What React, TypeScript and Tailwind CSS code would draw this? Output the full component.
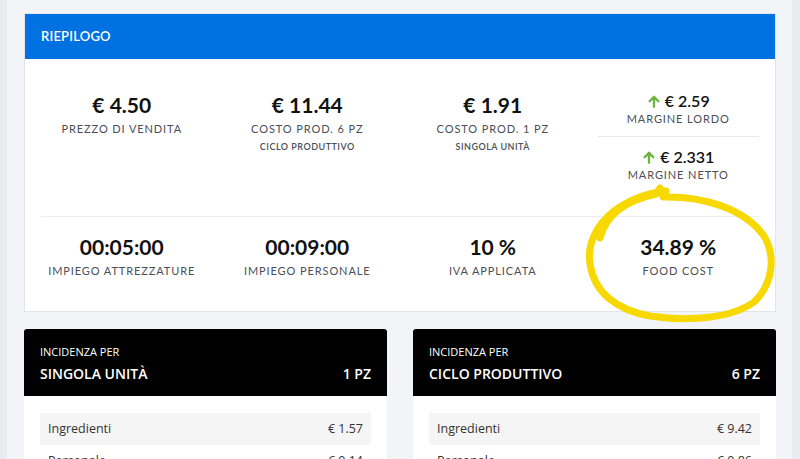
const ArrowUpIcon = () => (
  <svg width="14" height="15" viewBox="0 0 24 24" fill="none" stroke="#6db33f" strokeWidth="4" strokeLinecap="round" strokeLinejoin="round" className="mr-1 inline-block">
    <path d="M12 21V5M4.5 11.5L12 4l7.5 7.5" />
  </svg>
);

const Stat = ({ value, label, sub }: { value: string; label: string; sub?: string }) => (
  <div className="flex flex-col items-center px-3 text-center">
    <div className="text-[21px] font-bold leading-7 text-[#111]">{value}</div>
    <div className="mt-0.5 text-[11px] leading-4 tracking-[0.9px] text-[#4a4f57]">{label}</div>
    {sub && <div className="mt-0.5 text-[9px] font-semibold leading-4 tracking-[0.5px] text-[#4a4f57]">{sub}</div>}
  </div>
);

const Margin = ({ value, label }: { value: string; label: string }) => (
  <div className="flex flex-col items-center">
    <div className="flex items-center text-[16px] font-semibold leading-5 text-[#111]">
      <ArrowUpIcon />
      {value}
    </div>
    <div className="text-[11px] leading-4 tracking-[0.9px] text-[#4a4f57]">{label}</div>
  </div>
);

const Incidenza = ({ title, qty, rows }: { title: string; qty: string; rows: [string, string][] }) => (
  <div className="flex-1 overflow-hidden rounded-t-[3px] bg-white font-['Open_Sans',sans-serif]">
    <div className="bg-black px-4 pb-3 pt-[15px] text-white">
      <div className="text-[11px] leading-4">INCIDENZA PER</div>
      <div className="mt-1 flex justify-between text-[14px] font-semibold leading-5">
        <span>{title}</span>
        <span>{qty}</span>
      </div>
    </div>
    <div className="px-4 pt-[17px]">
      {rows.map(([k, v], i) => (
        <div key={k} className={`flex h-8 items-center justify-between px-2 text-[12.5px] text-[#333] ${i % 2 === 0 ? "bg-[#f5f5f5]" : ""}`}>
          <span>{k}</span>
          <span>{v}</span>
        </div>
      ))}
    </div>
  </div>
);

export default function App() {
  return (
    <div className="relative flex h-[459px] w-[800px] overflow-hidden bg-[#e9ebef] font-['Lato',sans-serif]">
      <div className="w-[7px]" />
      <div className="flex-1 bg-[#f3f4f7] pl-[17px] pr-4 pt-[13px]">
        <div className="border border-[#e2e5ea] bg-white">
          <div className="flex h-[45px] items-center bg-[#0071e0] px-4 text-[13px] font-semibold tracking-[0.2px] text-white">
            RIEPILOGO
          </div>
          <div className="p-4">
            <div className="-mx-3 grid grid-cols-4 pb-[33px] pt-4">
              <Stat value="€ 4.50" label="PREZZO DI VENDITA" />
              <Stat value="€ 11.44" label="COSTO PROD. 6 PZ" sub="CICLO PRODUTTIVO" />
              <Stat value="€ 1.91" label="COSTO PROD. 1 PZ" sub="SINGOLA UNITÀ" />
              <div className="px-3">
                <Margin value="€ 2.59" label="MARGINE LORDO" />
                <div className="mt-[9px] border-t border-[#e6e8ec] pt-[10px]">
                  <Margin value="€ 2.331" label="MARGINE NETTO" />
                </div>
              </div>
            </div>
            <div className="border-t border-[#eceef1]">
              <div className="-mx-3 grid grid-cols-4 pb-4 pt-4">
                <Stat value="00:05:00" label="IMPIEGO ATTREZZATURE" />
                <Stat value="00:09:00" label="IMPIEGO PERSONALE" />
                <Stat value="10 %" label="IVA APPLICATA" />
                <Stat value="34.89 %" label="FOOD COST" />
              </div>
            </div>
          </div>
        </div>
        <div className="mt-[17px] flex gap-[26px]">
          <Incidenza title="SINGOLA UNITÀ" qty="1 PZ" rows={[["Ingredienti", "€ 1.57"], ["Personale", "€ 0.14"]]} />
          <Incidenza title="CICLO PRODUTTIVO" qty="6 PZ" rows={[["Ingredienti", "€ 9.42"], ["Personale", "€ 0.86"]]} />
        </div>
      </div>
      <div className="w-2" />
      <svg className="pointer-events-none absolute left-0 top-0" width="800" height="459">
        <path
          d="M600 238 C606 214 628 200 656 194 L660 188 L663 197 C702 196 744 208 764 236 C776 256 773 284 754 302 C732 318 690 322 650 316 C616 310 594 292 590 264 C587 246 595 226 614 211 C630 199 648 193 666 191"
          fill="none"
          stroke="#f7d800"
          strokeWidth="7"
          strokeLinecap="round"
          strokeLinejoin="round"
        />
      </svg>
    </div>
  );
}
